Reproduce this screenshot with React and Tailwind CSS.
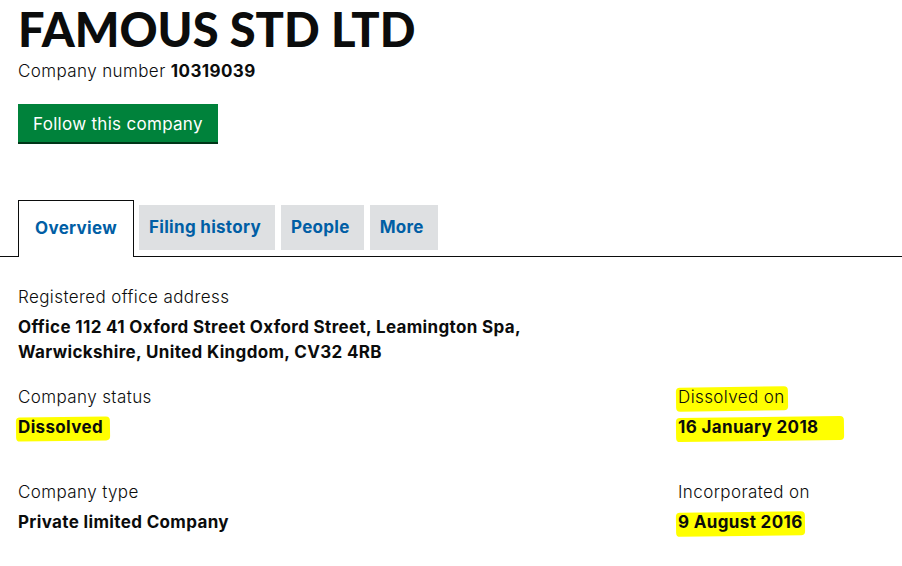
import React from "react";

const Mark = ({ children, ext = "-right-[3px]" }) => (
  <span className="relative inline-block">
    <span
      className={`absolute -left-[2px] ${ext} top-[2px] bottom-[-1px] bg-[#ffff00] rounded-[4px] -rotate-[0.8deg]`}
    />
    <span className="relative">{children}</span>
  </span>
);

const Field = ({ label, value, markLabel, markValue, ext }) => (
  <div className="flex flex-col">
    <div className="text-[17px] leading-[25px] font-light tracking-[0.4px]">
      {markLabel ? <Mark>{label}</Mark> : label}
    </div>
    <div className="mt-[5px] text-[17px] leading-[25px] font-bold tracking-[0.35px]">
      {markValue ? <Mark ext={ext}>{value}</Mark> : value}
    </div>
  </div>
);

export default function App() {
  const tabs = ["Filing history", "People", "More"];
  return (
    <div className="w-[902px] h-[566px] overflow-hidden bg-white text-[#0b0c0c] font-['Inter',sans-serif]">
      <div className="pl-[18px]">
        <h1 className="pt-[4px] text-[47px] leading-[50px] font-black font-['Lato',sans-serif]">FAMOUS STD LTD</h1>
        <p className="mt-[5px] text-[17px] leading-[25px] font-light tracking-[0.4px]">
          Company number <span className="font-bold">10319039</span>
        </p>
        <button className="mt-[20px] h-[40px] px-[15px] pt-[3px] bg-[#00823b] border-b-2 border-[#003618] text-white text-[17px] font-normal tracking-[0.3px]">
          Follow this company
        </button>
      </div>

      <div className="mt-[56px] flex items-end border-b border-[#0b0c0c] pl-[18px]">
        <div className="-mb-px h-[57px] w-[116px] flex items-center justify-center border border-b-0 border-[#0b0c0c] bg-white text-[#005ea5] text-[17px] font-bold tracking-[0.3px]">
          Overview
        </div>
        <div className="flex gap-[6px] ml-[5px] mb-[6px]">
          {tabs.map((t) => (
            <div
              key={t}
              className="h-[45px] pl-[10px] pr-[14px] flex items-center bg-[#dee0e2] text-[#005ea5] text-[17px] font-bold tracking-[0.3px]"
            >
              {t}
            </div>
          ))}
        </div>
      </div>

      <div className="pl-[18px] pt-[28px]">
        <div className="text-[17px] leading-[25px] font-light tracking-[0.4px]">Registered office address</div>
        <div className="mt-[5px] text-[17px] leading-[25px] font-bold tracking-[0.35px]">
          Office 112 41 Oxford Street Oxford Street, Leamington Spa,
          <br />
          Warwickshire, United Kingdom, CV32 4RB
        </div>

        <div className="mt-[20px] grid grid-cols-[660px_1fr] gap-y-[40px]">
          <Field label="Company status" value="Dissolved" markValue ext="-right-[7px]" />
          <Field label="Dissolved on" value="16 January 2018" markLabel markValue ext="-right-[25px]" />
          <Field label="Company type" value="Private limited Company" />
          <Field label="Incorporated on" value="9 August 2016" markValue ext="-right-[2px]" />
        </div>
      </div>
    </div>
  );
}
